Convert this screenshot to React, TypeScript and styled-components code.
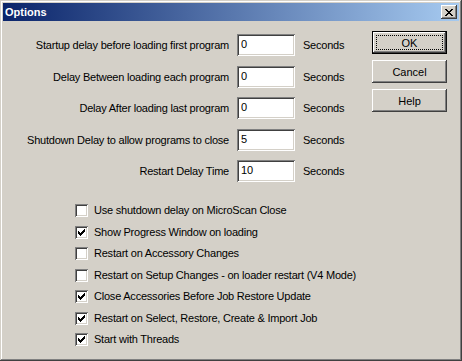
import React from "react";
import styled, { createGlobalStyle } from "styled-components";

const GlobalStyle = createGlobalStyle`
  html, body {
    margin: 0;
    padding: 0;
    background: #d4d0c8;
  }
  * {
    box-sizing: border-box;
  }
`;

const fields = [
  { label: "Startup delay before loading first program", value: "0" },
  { label: "Delay Between loading each program", value: "0" },
  { label: "Delay After loading last program", value: "0" },
  { label: "Shutdown Delay to allow programs to close", value: "5" },
  { label: "Restart Delay Time", value: "10" },
];

const options = [
  { label: "Use shutdown delay on MicroScan Close", checked: false },
  { label: "Show Progress Window on loading", checked: true },
  { label: "Restart on Accessory Changes", checked: false },
  { label: "Restart on Setup Changes - on loader restart (V4 Mode)", checked: false },
  { label: "Close Accessories Before Job Restore Update", checked: true },
  { label: "Restart on Select, Restore, Create & Import Job", checked: true },
  { label: "Start with Threads", checked: true },
];

// 7x7 classic check mark, one 3px column per x
const checkPath = [2, 3, 4, 3, 2, 1, 0]
  .map((top, x) => `M${x} ${top}h1v3h-1z`)
  .join("");

const closePath = [
  "M0 0h2v1h-2z M6 0h2v1h-2z",
  "M1 1h2v1h-2z M5 1h2v1h-2z",
  "M2 2h4v1h-4z",
  "M3 3h2v1h-2z",
  "M2 4h4v1h-4z",
  "M1 5h2v1h-2z M5 5h2v1h-2z",
  "M0 6h2v1h-2z M6 6h2v1h-2z",
].join(" ");

const App = () => {
  return (
    <>
      <GlobalStyle />
      <Window>
        <TitleBar>
          <Title>Options</Title>
          <CloseButton aria-label="Close">
            <svg width="8" height="7" viewBox="0 0 8 7" shapeRendering="crispEdges">
              <path d={closePath} fill="#000" />
            </svg>
          </CloseButton>
        </TitleBar>
        <Client>
          <TopSection>
            <FieldGrid>
              {fields.map((f) => (
                <React.Fragment key={f.label}>
                  <FieldLabel>{f.label}</FieldLabel>
                  <EditBox defaultValue={f.value} />
                  <Unit>Seconds</Unit>
                </React.Fragment>
              ))}
            </FieldGrid>
            <ButtonColumn>
              <PushButton $default>
                <FocusRing>OK</FocusRing>
              </PushButton>
              <PushButton>Cancel</PushButton>
              <PushButton>Help</PushButton>
            </ButtonColumn>
          </TopSection>
          <CheckList>
            {options.map((o) => (
              <CheckRow key={o.label}>
                <CheckBox>
                  {o.checked && (
                    <svg width="7" height="7" viewBox="0 0 7 7" shapeRendering="crispEdges">
                      <path d={checkPath} fill="#000" />
                    </svg>
                  )}
                </CheckBox>
                <CheckLabel>{o.label}</CheckLabel>
              </CheckRow>
            ))}
          </CheckList>
        </Client>
      </Window>
    </>
  );
};

export default App;

const Window = styled.div`
  width: 462px;
  height: 361px;
  padding: 3px;
  background: #d4d0c8;
  box-shadow: inset -1px -1px #404040, inset 1px 1px #d4d0c8,
    inset -2px -2px #808080, inset 2px 2px #ffffff;
  display: flex;
  flex-direction: column;
  font-family: "Liberation Sans", Arial, sans-serif;
  font-size: 11px;
  letter-spacing: -0.22px;
  color: #000;
`;

const TitleBar = styled.div`
  height: 18px;
  display: flex;
  align-items: center;
  justify-content: space-between;
  padding: 0 2px 0 2px;
  background: linear-gradient(to right, #0a246a, #a6caf0);
`;

const Title = styled.span`
  color: #fff;
  font-weight: bold;
  font-size: 11px;
  letter-spacing: 0;
  padding-left: 0;
`;

const CloseButton = styled.button`
  width: 16px;
  height: 14px;
  padding: 0;
  border: none;
  background: #d4d0c8;
  display: flex;
  align-items: center;
  justify-content: center;
  box-shadow: inset -1px -1px #404040, inset 1px 1px #ffffff,
    inset -2px -2px #808080, inset 2px 2px #d4d0c8;

  svg {
    display: block;
  }
`;

const Client = styled.div`
  flex: 1;
  padding: 10px 12px 0 17px;
  display: flex;
  flex-direction: column;
`;

const TopSection = styled.div`
  display: flex;
  align-items: flex-start;
`;

const FieldGrid = styled.div`
  margin-top: 3px;
  display: grid;
  grid-template-columns: 209px 58px auto;
  grid-auto-rows: 22px;
  column-gap: 8px;
  row-gap: 9.5px;
  align-items: center;
`;

const FieldLabel = styled.span`
  text-align: right;
  white-space: nowrap;
`;

const EditBox = styled.input`
  width: 58px;
  height: 22px;
  border: none;
  outline: none;
  padding: 0 3px 2px 4px;
  background: #fff;
  font: inherit;
  color: #000;
  box-shadow: inset 1px 1px #808080, inset -1px -1px #ffffff,
    inset 2px 2px #404040, inset -2px -2px #d4d0c8;
`;

const Unit = styled.span`
  white-space: nowrap;
`;

const ButtonColumn = styled.div`
  margin-left: auto;
  display: flex;
  flex-direction: column;
  gap: 6px;
`;

const PushButton = styled.button<{ $default?: boolean }>`
  width: 75px;
  height: 23px;
  padding: ${(p) => (p.$default ? "4px" : "0")};
  border: none;
  background: #d4d0c8;
  font: inherit;
  color: #000;
  display: flex;
  align-items: stretch;
  justify-content: center;
  align-items: center;
  box-shadow: ${(p) =>
    p.$default
      ? "inset 0 0 0 1px #000, inset -2px -2px #404040, inset 2px 2px #ffffff, inset -3px -3px #808080, inset 3px 3px #d4d0c8"
      : "inset -1px -1px #404040, inset 1px 1px #ffffff, inset -2px -2px #808080, inset 2px 2px #d4d0c8"};
`;

const FocusRing = styled.span`
  flex: 1;
  align-self: stretch;
  display: flex;
  align-items: center;
  justify-content: center;
  outline: 1px dotted #000;
  outline-offset: -1px;
`;

const CheckList = styled.div`
  margin-top: 22px;
  margin-left: 55px;
  display: flex;
  flex-direction: column;
  gap: 8.5px;
`;

const CheckRow = styled.label`
  height: 13px;
  display: flex;
  align-items: center;
  gap: 6px;
`;

const CheckBox = styled.span`
  width: 13px;
  height: 13px;
  flex: none;
  background: #fff;
  padding: 3px;
  box-shadow: inset 1px 1px #808080, inset -1px -1px #ffffff,
    inset 2px 2px #404040, inset -2px -2px #d4d0c8;

  svg {
    display: block;
  }
`;

const CheckLabel = styled.span`
  white-space: nowrap;
  line-height: 13px;
`;
